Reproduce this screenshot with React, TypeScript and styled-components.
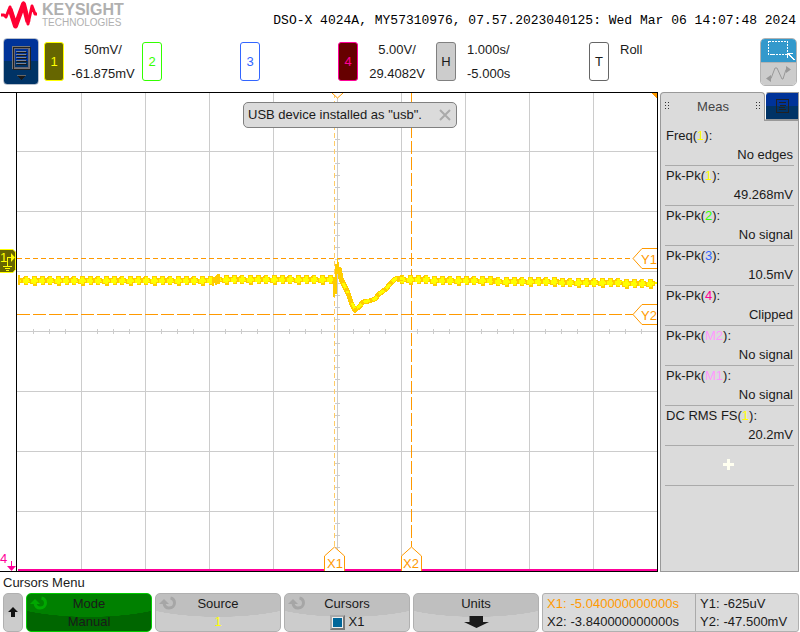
import React from "react";
import styled, { createGlobalStyle, css } from "styled-components";

const GlobalStyle = createGlobalStyle`
  * { box-sizing: border-box; }
  body { margin: 0; background: #fff; color: #1a1a1a; font: 13px/16px "Liberation Sans", Arial, sans-serif; }
  button { font: inherit; color: inherit; cursor: pointer; padding: 0; }
  h1, h2, p, dl, dd, dt { margin: 0; font-size: inherit; font-weight: normal; }
`;

const Page = styled.div`
  display: flex;
  flex-direction: column;
`;

const Header = styled.header`
  display: flex;
  justify-content: space-between;
  height: 38px;
  padding: 0 4px 0 1px;
`;

const Brand = styled.div`
  display: flex;
  gap: 4px;
  color: #b0b0b0;
`;

const BrandName = styled.p`
  padding-top: 2px;
  font-size: 16px;
  font-weight: bold;
  line-height: 15px;
`;

const BrandSub = styled.p`
  font-size: 10px;
  line-height: 11px;
`;

const Status = styled.h1`
  padding-top: 13px;
  color: #000;
  font-family: "Liberation Mono", "Courier New", monospace;
  white-space: nowrap;
`;

const Toolbar = styled.div`
  display: flex;
  align-items: flex-start;
  height: 54px;
  padding: 0 3px;
`;

const MenuButton = styled.button`
  display: flex;
  flex-direction: column;
  align-items: center;
  width: 36px;
  height: 47px;
  margin-right: 5px;
  border: 1px solid #b8c0cc;
  border-radius: 4px;
  background: linear-gradient(#003399 50%, #003366 50%);
`;

const Group = styled.div<{ $width?: number }>`
  display: flex;
  width: ${(p) => (p.$width ? p.$width + "px" : "auto")};
  flex: none;
  padding-top: 4px;
`;

const Key = styled.button<{ $edge: string; $fill?: string; $ink?: string }>`
  flex: none;
  width: 20px;
  height: 39px;
  border: 1px solid ${(p) => p.$edge};
  border-radius: 3px;
  background: ${(p) => p.$fill || "#fff"};
  color: ${(p) => p.$ink || p.$edge};
`;

const Reading = styled.div<{ $left?: boolean }>`
  flex: 1;
  padding-left: ${(p) => (p.$left ? "11px" : "0")};
  line-height: 24px;
  margin-top: -4px;
  text-align: ${(p) => (p.$left ? "left" : "center")};
  white-space: nowrap;
`;

const ModeSwitch = styled.div`
  display: flex;
  flex-direction: column;
  margin-left: auto;
  width: 37px;
  height: 48px;
  border: 1px solid #b3b3b3;
  border-radius: 5px;
  overflow: hidden;
`;

const ModeButton = styled.button<{ $on?: boolean }>`
  display: flex;
  align-items: center;
  justify-content: center;
  flex: 1;
  border: 0;
  background: ${(p) => (p.$on ? "#3399cc" : "#cccccc")};
  border-top: ${(p) => (p.$on ? "0" : "1px solid #b3b3b3")};
`;

const Main = styled.main`
  display: flex;
  gap: 2px;
  padding-right: 1px;
`;

const Screen = styled.section`
  position: relative;
  flex: 1;
  min-width: 0;
`;

const Plot = styled.svg`
  display: block;
  width: 100%;
  height: auto;
  font: 13px "Liberation Sans", Arial, sans-serif;
`;

const Toast = styled.div`
  position: absolute;
  top: 10px;
  left: 243px;
  display: flex;
  align-items: center;
  justify-content: space-between;
  width: 214px;
  height: 26px;
  padding: 0 5px 0 4px;
  border: 1px solid #808080;
  border-radius: 5px;
  background: #dbdbdb;
  white-space: nowrap;
`;

const Close = styled.button`
  display: flex;
  border: 0;
  background: none;
`;

const Side = styled.aside`
  display: flex;
  flex-direction: column;
  flex: none;
  width: 139px;
`;

const Tabs = styled.div`
  display: flex;
  height: 28px;
`;

const Tab = styled.h2`
  display: flex;
  flex: 1;
  align-items: center;
  justify-content: space-between;
  padding: 0 3px 0 4px;
  border: 1px solid #999;
  border-bottom: 0;
  border-radius: 4px 4px 0 0;
  background: #dbdbdb;
  color: #444;
`;

const SideMenu = styled.button`
  display: flex;
  align-items: center;
  justify-content: center;
  width: 34px;
  border: 1px solid #999;
  border-left: 1px solid #fff;
  border-radius: 4px 0 0 0;
  background: linear-gradient(#003399 50%, #003366 50%);
`;

const SideBody = styled.div`
  flex: 1;
  padding: 6px 4px 0;
  border: 1px solid #999;
  border-top: 0;
  background: linear-gradient(#999, #999) right top / 34px 1px no-repeat #dbdbdb;
`;

const Measure = styled.div`
  height: 40px;
  padding: 1px 1px 0;
  line-height: 22px;
  border-bottom: 1px solid #aaa;

  dt { line-height: 17px; }
  dd { text-align: right; }
`;

const Source = styled.span<{ $ink: string }>`
  color: ${(p) => p.$ink};
`;

const AddButton = styled.button`
  display: flex;
  align-items: center;
  justify-content: center;
  width: 100%;
  height: 40px;
  padding: 0 2px 2px 0;
  border: 0;
  border-bottom: 1px solid #aaa;
  background: none;
`;

const MenuTitle = styled.h2`
  height: 21px;
  padding: 3px 3px 0;
`;

const SoftKeys = styled.footer`
  display: flex;
  gap: 3px;
  height: 39px;
  padding: 0 1px 0 3px;
`;

const softFace = css<{ $active?: boolean }>`
  position: relative;
  display: flex;
  flex-direction: column;
  align-items: center;
  flex: 1;
  height: 39px;
  padding: 1px 0 0;
  border: 1px solid ${(p) => (p.$active ? "#00cc00" : "#b0b0b0")};
  border-radius: 5px;
  line-height: 18px;
  background: ${(p) =>
    p.$active
      ? "radial-gradient(ellipse 75% 62% at 50% 0, #008000 99%, #006600 100%)"
      : "radial-gradient(ellipse 75% 62% at 50% 0, #bfbfbf 99%, #cccccc 100%)"};
`;

const SoftKey = styled.button<{ $active?: boolean }>`${softFace}`;
const SoftPanel = styled.div<{ $active?: boolean }>`${softFace}`;

const BackKey = styled.button`
  display: flex;
  align-items: center;
  justify-content: center;
  width: 20px;
  height: 39px;
  padding-bottom: 2px;
  border: 1px solid #b0b0b0;
  border-radius: 5px;
  background: linear-gradient(#bfbfbf 40%, #cccccc 60%);
`;

const KnobMark = styled.svg`
  position: absolute;
  left: 3px;
  top: 2px;
`;

const CheckLabel = styled.label`
  display: flex;
  align-items: center;
  gap: 4px;
`;

const Check = styled.input`
  appearance: none;
  width: 15px;
  height: 15px;
  margin: 0;
  border: 2px solid;
  border-color: #aaa #777 #777 #aaa;
  background: #fff;

  &:checked { background: #006699; box-shadow: inset 0 0 0 1px #eee; }
`;

const Readout = styled.div`
  display: flex;
  flex: none;
  width: 257px;
  border: 1px solid #b0b0b0;
  border-radius: 3px;
  background: #dbdbdb;
  line-height: 17px;
  white-space: nowrap;
`;

const ReadoutCell = styled.div<{ $grow?: boolean }>`
  display: grid;
  grid-template-columns: auto 1fr;
  column-gap: 4px;
  padding: 1px 0 0 4px;
  ${(p) => (p.$grow ? "flex: 1;" : "width: 153px; border-right: 1px solid #aaa;")}
`;

const Ink = styled.span<{ $hot?: boolean }>`
  color: ${(p) => (p.$hot ? "#ff9900" : "inherit")};
`;

const GripIcon = () => (
  <svg width="5" height="9" fill="#333" shapeRendering="crispEdges">
    {[0, 3, 6].map((y) => (
      <React.Fragment key={y}>
        <rect x="0" y={y} width="1" height="1" />
        <rect x="3" y={y} width="1" height="1" />
      </React.Fragment>
    ))}
  </svg>
);

const Knob = ({ ink }: { ink: string }) => (
  <KnobMark width="18" height="15" viewBox="0 0 18 15" fill="none">
    <path d="M5 7C5.500 10.500 7.500 12 10 12C13.500 12 15.500 9.500 15.500 7C15.500 4.500 14 2.500 11.500 2" stroke={ink} strokeWidth="3" />
    <path d="M0 8L5 3L10 8Z" fill={ink} />
  </KnobMark>
);

const channels = [
  { id: "1", edge: "#ffff00", fill: "#666600", ink: "#ffff00", lines: ["50mV/", "-61.875mV"] },
  { id: "2", edge: "#33ff00", lines: [] },
  { id: "3", edge: "#3366ff", lines: [] },
  { id: "4", edge: "#ff0099", fill: "#660000", ink: "#ff0099", lines: ["5.00V/", "29.4082V"] },
];

const measures = [
  { name: "Freq", src: "1", ink: "#ffff00", value: "No edges" },
  { name: "Pk-Pk", src: "1", ink: "#ffff00", value: "49.268mV" },
  { name: "Pk-Pk", src: "2", ink: "#33ff00", value: "No signal" },
  { name: "Pk-Pk", src: "3", ink: "#3366ff", value: "10.5mV" },
  { name: "Pk-Pk", src: "4", ink: "#ff0099", value: "Clipped" },
  { name: "Pk-Pk", src: "M2", ink: "#ff99ff", value: "No signal" },
  { name: "Pk-Pk", src: "M1", ink: "#ff99ff", value: "No signal" },
  { name: "DC RMS FS", src: "1", ink: "#ffff00", value: "20.2mV" },
];

const range = (from: number, to: number, step: number) => {
  const out: number[] = [];
  for (let v = from; v <= to; v += step) out.push(v);
  return out;
};

const gridPath =
  range(81, 593, 64).map((x) => `M${x} 93h1v478h-1z`).join("") +
  range(151, 511, 60).map((y) => `M17 ${y}h640v1h-640z`).join("") +
  range(33, 641, 16).map((x) => `M${x} 329h1v5h-1z`).join("") +
  range(103, 559, 12).map((y) => `M335 ${y}h5v1h-5z`).join("");

const level = (x: number) => {
  if (x < 214) return 280;
  if (x < 335) return 279;
  return Math.round(279 + ((x - 400) / 257) * 4);
};

const beads = [...range(26, 330, 8), ...range(402, 654, 8)].map((x, i) => ({ x, y: level(x), flip: i % 3 }));

const dip = "M339 268L341 279L343 283L348 293L352 305L355 310L359 307L363 302L369 301L375 299L379 294L386 289L391 283L395 279L403 278";

const Scope = () => (
  <Plot viewBox="0 92 658 480" role="img" aria-label="Oscilloscope waveform">
    <g shapeRendering="crispEdges">
      <path d={gridPath} fill="#cccccc" />
      <path d="M334.500 93V547" stroke="#ffcc66" strokeDasharray="5 3" />
      <path d="M411.500 93V547" stroke="#ff9900" strokeDasharray="13 3" />
      <path d="M17 258.500H634" stroke="#ff9900" strokeDasharray="5 3" />
      <path d="M17 314.500H634" stroke="#ff9900" strokeDasharray="13 3" />

      <path d="M18 275h2v3h2v5h-2v2h-2z" fill="#ffcc00" />
      <path d="M20 280.500H214M218 279.500H333" stroke="#ffff00" strokeWidth="2" />
      <path d="M400 279.500H440L500 280.500L560 281.500L657 283" stroke="#ffff00" strokeWidth="2" fill="none" />
      {beads.map(({ x, y, flip }) => (
        <g key={x}>
          <path d={`M${x - 2} ${y - 4}h${flip ? 5 : 4}v2h2v5h-2v${flip === 1 ? 3 : 2}h-4v-2h-3v-3h-1v-2h3z`} fill="#ffcc00" />
          <path d={`M${x - 1} ${y - 3}h3v2h2v3h-2v2h-3v-1h-2v-4h2z`} fill="#ffff00" />
        </g>
      ))}
      <path d="M212 279h2v7h-2zM215 278h2v7h-2zM217 274h3v9h-3z" fill="#ffcc00" />
      <path d={dip} stroke="#ffcc00" strokeWidth="5" fill="none" />
      <path d="M343 283L348 293M352 303L355 309L361 305L364 302L375 299L379 294L386 289L391 283L395 279L403 278" stroke="#ffff00" strokeWidth="3" fill="none" strokeDasharray="6 3" />
      <path d="M333 278h2v19h-2zM335 264h2v30h-2zM337 258h1v16h-1zM338 262h1v10h-1zM339 267h2v10h-2z" fill="#ffcc00" />

      <path d="M18 569h639v2H18z" fill="#ff0099" />
      <path d="M0 92h658v1H0zM0 571h658v1H0zM16 92h1v480h-1zM657 92h1v480h-1z" fill="#000" />
      <path d="M651 93h6v6z" fill="#ff9900" />
    </g>

    <g fill="#fff" stroke="#ff9900">
      <path d="M332 93L337.500 98L343 93" />
      <path d="M657 248.500H642L633 258.500L642 268.500H657" />
      <path d="M657 304.500H642L633 314.500L642 324.500H657" />
      <path d="M324.500 571V556L334.500 547L344.500 556V571" />
      <path d="M401.500 571V556L411.500 547L421.500 556V571" />
    </g>
    <g fill="#ff9900">
      <text x="641" y="264">Y1</text>
      <text x="641" y="320">Y2</text>
      <text x="327" y="568">X1</text>
      <text x="403" y="568">X2</text>
    </g>
    <path d="M657.500 240V330" stroke="#000" />

    <path d="M0 249.500H13L15.500 252V269.500L13 272.500H0" fill="#666600" stroke="#ffff00" />
    <text x="0" y="262" fill="#ffff00">1</text>
    <path d="M7.500 266V257.500H11M3 266.500H12M5 268.500H10M6 270.500H9" stroke="#ffff00" fill="none" shapeRendering="crispEdges" />
    <path d="M11 253L15 257.500L11 262Z" fill="#ffff00" />

    <text x="0" y="563" fill="#ff0099">4</text>
    <path d="M11.500 561V568" stroke="#ff0099" />
    <path d="M7 566H16L11.500 571Z" fill="#ff0099" />
  </Plot>
);

export default function App() {
  return (
    <Page>
      <GlobalStyle />
      <Header>
        <Brand>
          <svg width="37" height="30" viewBox="0 0 37 30" fill="none" stroke="#ff0033" strokeLinejoin="round" aria-hidden="true">
            <path d="M0 15H3L5 17L9 7L14.500 26L22.500 3L27 24L31 6L34 14H36" strokeWidth="3" />
            <path d="M9 9L14.500 26L22.500 4L27 22" strokeWidth="5" />
          </svg>
          <div>
            <BrandName>KEYSIGHT</BrandName>
            <BrandSub>TECHNOLOGIES</BrandSub>
          </div>
        </Brand>
        <Status>DSO-X 4024A, MY57310976, 07.57.2023040125: Wed Mar 06 14:07:48 2024</Status>
      </Header>

      <Toolbar>
        <MenuButton aria-label="Main menu">
          <svg width="34" height="45" viewBox="0 0 34 45" fill="none" shapeRendering="crispEdges">
            <path d="M8.500 7.500h17v22h-17z" stroke="#777777" />
            <path d="M9.500 8.500h17v22h-17z" stroke="#222222" />
            <path d="M10.500 9.500h14v19h-14z" stroke="#666677" />
            <path d="M12 12.500h10M12 15.500h10M12 18.500h10M12 21.500h10M12 24.500h10" stroke="#7a859a" />
            <path d="M13 13.500h10M13 16.500h10M13 19.500h10M13 22.500h10M13 25.500h10" stroke="#1a1a1a" />
            <path d="M13 36h9l-5 5z" fill="#1a1a1a" />
            <path d="M13 36.500h9" stroke="#666" />
          </svg>
        </MenuButton>
        {channels.map((c) => (
          <Group key={c.id} $width={98}>
            <Key $edge={c.edge} $fill={c.fill} $ink={c.ink}>{c.id}</Key>
            <Reading>
              {c.lines.map((l) => <div key={l}>{l}</div>)}
            </Reading>
          </Group>
        ))}
        <Group $width={153}>
          <Key $edge="#808080" $fill="#cccccc" $ink="#1a1a1a">H</Key>
          <Reading $left>
            <div>1.000s/</div>
            <div>-5.000s</div>
          </Reading>
        </Group>
        <Group>
          <Key $edge="#666666" $ink="#1a1a1a">T</Key>
          <Reading $left>Roll</Reading>
        </Group>
        <ModeSwitch>
          <ModeButton $on aria-label="Zoom box">
            <svg width="35" height="22" fill="none" stroke="#fff" shapeRendering="crispEdges">
              <path d="M7.500 2.500h19v13h-19z" strokeDasharray="2 1" />
              <path d="M26 14h6v1h-3v1h1v1h1v1h1v1h1v1h1v1h-2v-1h-1v-1h-1v-1h-1v-1h-1v-1h-1v3h-1z" fill="#fff" stroke="none" />
            </svg>
          </ModeButton>
          <ModeButton aria-label="Waveform drag">
            <svg width="35" height="22" fill="none" stroke="#999">
              <path d="M6 15.500H10L14 5H16L21 16H22L25 6.500H28" />
              <path d="M25 3L30 6.500L25 10ZM10 12L5 15.500L10 19Z" fill="#999" stroke="none" />
            </svg>
          </ModeButton>
        </ModeSwitch>
      </Toolbar>

      <Main>
        <Screen>
          <Scope />
          <Toast role="status">
            <span>USB device installed as "usb".</span>
            <Close aria-label="Close">
              <svg width="12" height="12" stroke="#aaa" strokeWidth="2">
                <path d="M1 1L11 11M11 1L1 11" />
              </svg>
            </Close>
          </Toast>
        </Screen>

        <Side>
          <Tabs>
            <Tab><GripIcon /><span>Meas</span><GripIcon /></Tab>
            <SideMenu aria-label="Measurement menu">
              <svg width="13" height="15" fill="none" stroke="#222" shapeRendering="crispEdges">
                <path d="M.5 .5h12v13h-12zM3 3.500h7M4 6.500h6M3 8.500h6M3 10.500h7" />
              </svg>
            </SideMenu>
          </Tabs>
          <SideBody>
            <dl>
              {measures.map((m) => (
                <Measure key={m.name + m.src}>
                  <dt>{m.name}(<Source $ink={m.ink}>{m.src}</Source>):</dt>
                  <dd>{m.value}</dd>
                </Measure>
              ))}
            </dl>
            <AddButton aria-label="Add measurement">
              <svg width="11" height="11" stroke="#fffff0" strokeWidth="3">
                <path d="M0 5.500H11M5.500 0V11" />
              </svg>
            </AddButton>
          </SideBody>
        </Side>
      </Main>

      <MenuTitle>Cursors Menu</MenuTitle>
      <SoftKeys>
        <BackKey aria-label="Back">
          <svg width="10" height="10"><path d="M5 0L10 5H7V10H3V5H0Z" fill="#111" /></svg>
        </BackKey>
        <SoftKey $active>
          <Knob ink="#00a800" />
          <span>Mode</span>
          <span>Manual</span>
        </SoftKey>
        <SoftKey>
          <Knob ink="#a6a6a6" />
          <span>Source</span>
          <Source $ink="#ffff00">1</Source>
        </SoftKey>
        <SoftPanel>
          <Knob ink="#a6a6a6" />
          <span>Cursors</span>
          <CheckLabel>
            <Check type="checkbox" defaultChecked />
            X1
          </CheckLabel>
        </SoftPanel>
        <SoftKey>
          <span>Units</span>
          <svg width="25" height="18" viewBox="0 0 25 18"><path d="M5.500 3H19V9H25L12.500 15L0 9H5.500Z" fill="#1a1a1a" /></svg>
        </SoftKey>
        <Readout>
          <ReadoutCell>
            <Ink $hot>X1:</Ink><Ink $hot>-5.040000000000s</Ink>
            <Ink>X2:</Ink><Ink>-3.840000000000s</Ink>
          </ReadoutCell>
          <ReadoutCell $grow>
            <Ink>Y1:</Ink><Ink>-625uV</Ink>
            <Ink>Y2:</Ink><Ink>-47.500mV</Ink>
          </ReadoutCell>
        </Readout>
      </SoftKeys>
    </Page>
  );
}
